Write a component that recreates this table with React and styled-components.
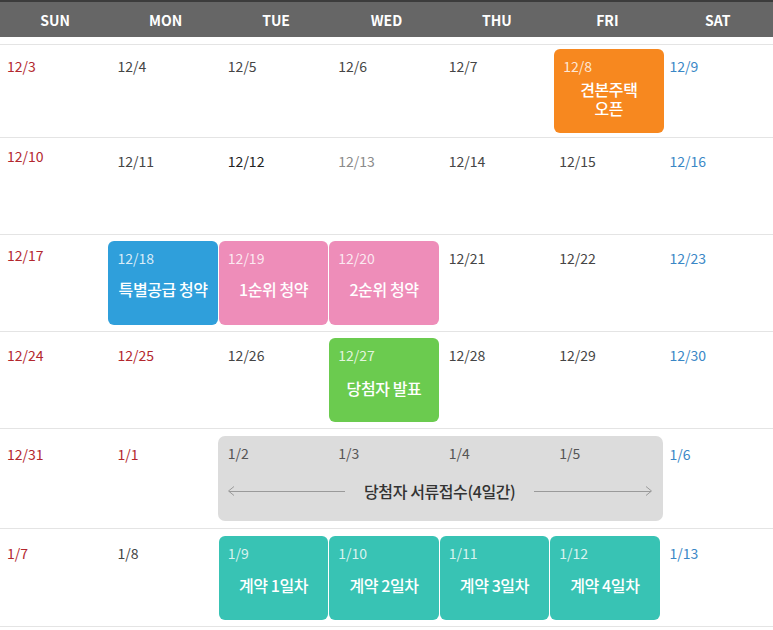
import React from "react";
import styled, { createGlobalStyle } from "styled-components";

const GlobalStyle = createGlobalStyle`
  body {
    margin: 0;
    background: #fff;
    font-family: "Noto Sans CJK KR", "Noto Sans", sans-serif;
  }
`;

const DAYS = ["SUN", "MON", "TUE", "WED", "THU", "FRI", "SAT"];

const COLORS = {
  orange: "#f7881f",
  blue: "#2f9fdb",
  pink: "#ee8db9",
  green: "#6bcb4f",
  teal: "#38c3b4",
};

const TONES = {
  sun: "#b3282e",
  sat: "#3a87c6",
  day: "#454545",
  dark: "#222",
  light: "#8a8a8a",
};

// 주 단위 데이터
const WEEKS = [
  {
    h: 93,
    cells: [
      { d: "12/3" },
      { d: "12/4" },
      { d: "12/5" },
      { d: "12/6" },
      { d: "12/7" },
      { d: "12/8", color: "orange", title: "견본주택\n오픈", shift: 4 },
      { d: "12/9" },
    ],
  },
  {
    h: 97,
    cells: [
      { d: "12/10", up: 5 },
      { d: "12/11" },
      { d: "12/12", tone: "dark" },
      { d: "12/13", tone: "light" },
      { d: "12/14" },
      { d: "12/15" },
      { d: "12/16" },
    ],
  },
  {
    h: 97,
    cells: [
      { d: "12/17", up: 3 },
      { d: "12/18", color: "blue", title: "특별공급 청약", lift: 4 },
      { d: "12/19", color: "pink", title: "1순위 청약", lift: 4 },
      { d: "12/20", color: "pink", title: "2순위 청약", lift: 4 },
      { d: "12/21" },
      { d: "12/22" },
      { d: "12/23" },
    ],
  },
  {
    h: 97,
    cells: [
      { d: "12/24" },
      { d: "12/25", tone: "sun" },
      { d: "12/26" },
      { d: "12/27", color: "green", title: "당첨자 발표" },
      { d: "12/28" },
      { d: "12/29" },
      { d: "12/30" },
    ],
  },
  {
    h: 100,
    cells: [
      { d: "12/31" },
      { d: "1/1", tone: "sun" },
      {
        span: ["1/2", "1/3", "1/4", "1/5"],
        title: "당첨자 서류접수(4일간)",
      },
      { d: "1/6" },
    ],
  },
  {
    h: 99,
    last: true,
    cells: [
      { d: "1/7" },
      { d: "1/8" },
      { d: "1/9", color: "teal", title: "계약 1일차" },
      { d: "1/10", color: "teal", title: "계약 2일차" },
      { d: "1/11", color: "teal", title: "계약 3일차" },
      { d: "1/12", color: "teal", title: "계약 4일차" },
      { d: "1/13" },
    ],
  },
];

const Calendar = styled.div`
  width: 773px;
`;

const HeadRow = styled.div`
  display: grid;
  grid-template-columns: repeat(7, 1fr);
  height: 35px;
  background: #666;
  border-top: 2px solid #3c3c3c;
  margin-bottom: 7px;
`;

const HeadCell = styled.div`
  display: flex;
  align-items: center;
  justify-content: center;
  color: #fff;
  font-size: 14px;
  font-weight: 700;
`;

const Week = styled.div`
  display: grid;
  grid-template-columns: repeat(7, 1fr);
  align-items: center;
  box-sizing: border-box;
  height: ${(p) => p.$h}px;
  border-top: 1px solid #e4e4e4;
  border-bottom: ${(p) => (p.$last ? "1px solid #e4e4e4" : "none")};
`;

const Slot = styled.div`
  box-sizing: border-box;
  height: 84px;
  margin: 0 ${(p) => 3 - p.$shift}px 0 ${(p) => p.$shift - 2}px;
  padding: 8px 9px ${(p) => 10 + p.$lift}px;
  border-radius: 6px;
  background: ${(p) => p.$bg || "transparent"};
  display: flex;
  flex-direction: column;
`;

const DateLabel = styled.div`
  font-size: 14px;
  line-height: 18px;
  color: ${(p) => p.$color};
  margin-top: ${(p) => -(p.$up || 0)}px;
`;

const Title = styled.div`
  flex: 1;
  display: flex;
  align-items: center;
  justify-content: center;
`;

const TitleText = styled.span`
  color: #fff;
  font-size: 16px;
  font-weight: 500;
  line-height: 19px;
  letter-spacing: -0.4px;
  text-align: center;
  white-space: pre-line;
`;

const SpanBlock = styled.div`
  grid-column: span 4;
  box-sizing: border-box;
  height: 85px;
  margin: 0 0 0 -3px;
  padding: 8px 11px 10px 10px;
  border-radius: 7px;
  background: #dcdcdc;
  display: flex;
  flex-direction: column;
`;

const SpanDates = styled.div`
  display: grid;
  grid-template-columns: repeat(4, 110.5px);
`;

const SpanBody = styled.div`
  flex: 1;
  display: flex;
  align-items: center;
  gap: 19px;
  padding-top: 9px;
`;

const SpanText = styled.div`
  color: #333;
  font-size: 16px;
  font-weight: 500;
  letter-spacing: -0.4px;
  white-space: nowrap;
`;

const ArrowWrap = styled.div`
  flex: 1;
  display: flex;
  align-items: center;
  flex-direction: ${(p) => (p.$right ? "row-reverse" : "row")};
`;

const ArrowLine = styled.div`
  flex: 1;
  height: 1px;
  background: #9a9a9a;
  margin: ${(p) => (p.$right ? "0 -5px 0 0" : "0 0 0 -5px")};
`;

const Arrow = ({ right }) => (
  <ArrowWrap $right={right}>
    <svg width="6" height="10" viewBox="0 0 6 10" style={{ display: "block" }}>
      <path
        d={right ? "M0 0.5 L5.5 5 L0 9.5" : "M6 0.5 L0.5 5 L6 9.5"}
        fill="none"
        stroke="#9a9a9a"
        strokeWidth="1"
      />
    </svg>
    <ArrowLine $right={right} />
  </ArrowWrap>
);

const toneFor = (cell, col) => {
  if (cell.color) return "rgba(255,255,255,0.82)";
  if (cell.tone) return TONES[cell.tone];
  if (col === 0) return TONES.sun;
  if (col === 6) return TONES.sat;
  return TONES.day;
};

const App = () => {
  return (
    <Calendar>
      <GlobalStyle />
      <HeadRow>
        {DAYS.map((d) => (
          <HeadCell key={d}>{d}</HeadCell>
        ))}
      </HeadRow>
      {WEEKS.map((week, wi) => {
        let col = 0;
        return (
          <Week key={wi} $h={week.h} $last={week.last}>
            {week.cells.map((cell, ci) => {
              if (cell.span) {
                col += cell.span.length;
                return (
                  <SpanBlock key={ci}>
                    <SpanDates>
                      {cell.span.map((s) => (
                        <DateLabel key={s} $color="#555">
                          {s}
                        </DateLabel>
                      ))}
                    </SpanDates>
                    <SpanBody>
                      <Arrow />
                      <SpanText>{cell.title}</SpanText>
                      <Arrow right />
                    </SpanBody>
                  </SpanBlock>
                );
              }
              const c = col;
              col += 1;
              return (
                <Slot
                  key={ci}
                  $bg={cell.color && COLORS[cell.color]}
                  $shift={cell.shift || 0}
                  $lift={cell.lift || 0}
                >
                  <DateLabel $color={toneFor(cell, c)} $up={cell.up}>
                    {cell.d}
                  </DateLabel>
                  {cell.title && (
                    <Title>
                      <TitleText>{cell.title}</TitleText>
                    </Title>
                  )}
                </Slot>
              );
            })}
          </Week>
        );
      })}
    </Calendar>
  );
};

export default App;
